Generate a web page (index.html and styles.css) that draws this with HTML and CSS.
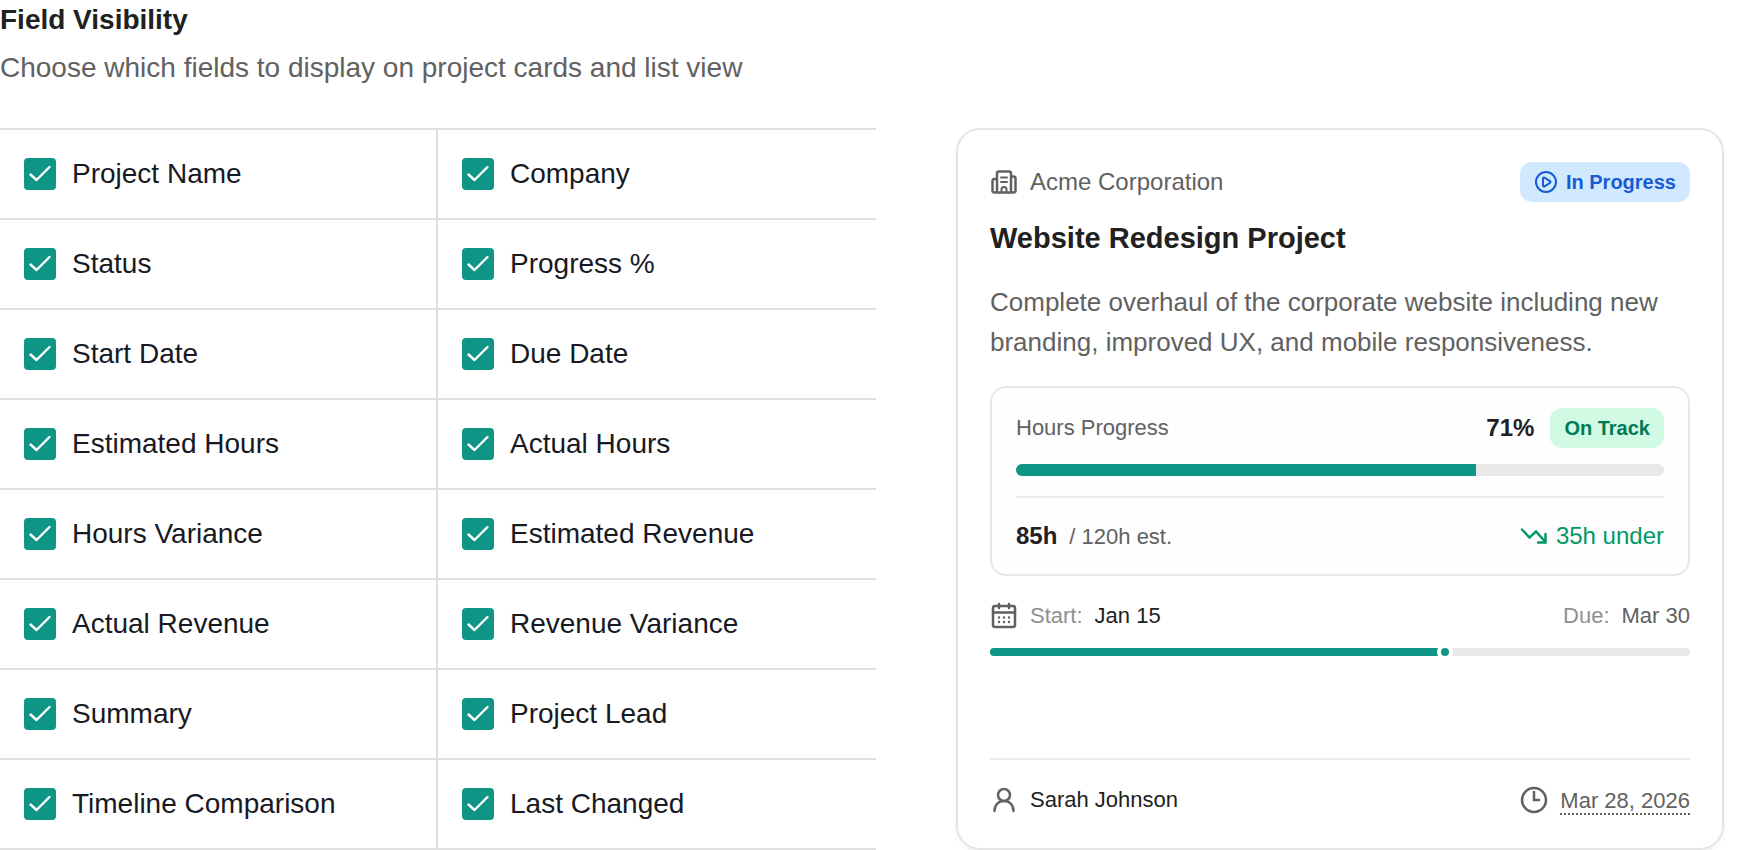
FILE: index.html
```html
<!DOCTYPE html>
<html lang="en">
<head>
    <meta charset="UTF-8">
    <meta name="viewport" content="width=device-width, initial-scale=1.0">
    <title>Field Visibility</title>
    <link rel="stylesheet" href="styles.css">
</head>
<body>
    <main class="settings">
        <header class="settings-header">
            <h1>Field Visibility</h1>
            <p>Choose which fields to display on project cards and list view</p>
        </header>
        <div class="settings-body">
            <form class="field-grid">
                <label class="field"><input type="checkbox" name="project-name" checked>Project Name</label>
                <label class="field"><input type="checkbox" name="company" checked>Company</label>
                <label class="field"><input type="checkbox" name="status" checked>Status</label>
                <label class="field"><input type="checkbox" name="progress" checked>Progress %</label>
                <label class="field"><input type="checkbox" name="start-date" checked>Start Date</label>
                <label class="field"><input type="checkbox" name="due-date" checked>Due Date</label>
                <label class="field"><input type="checkbox" name="estimated-hours" checked>Estimated Hours</label>
                <label class="field"><input type="checkbox" name="actual-hours" checked>Actual Hours</label>
                <label class="field"><input type="checkbox" name="hours-variance" checked>Hours Variance</label>
                <label class="field"><input type="checkbox" name="estimated-revenue" checked>Estimated Revenue</label>
                <label class="field"><input type="checkbox" name="actual-revenue" checked>Actual Revenue</label>
                <label class="field"><input type="checkbox" name="revenue-variance" checked>Revenue Variance</label>
                <label class="field"><input type="checkbox" name="summary" checked>Summary</label>
                <label class="field"><input type="checkbox" name="project-lead" checked>Project Lead</label>
                <label class="field"><input type="checkbox" name="timeline-comparison" checked>Timeline Comparison</label>
                <label class="field"><input type="checkbox" name="last-changed" checked>Last Changed</label>
            </form>

            <article class="card">
                <div class="row">
                    <span class="with-icon company">
                        <svg class="icon" viewBox="0 0 28 28">
                            <path d="M7 24.500V5.500a2 2 0 0 1 2-2h10a2 2 0 0 1 2 2v19M7 11H4.500A2 2 0 0 0 2.500 13v9.500a2 2 0 0 0 2 2h19a2 2 0 0 0 2-2V10.500a2 2 0 0 0-2-2H21"/>
                            <path class="thin" d="M11 9.500h6M11 14h6M11.500 24.500v-3a2.500 2.500 0 0 1 5 0v3"/>
                        </svg>
                        Acme Corporation
                    </span>
                    <span class="badge badge-blue">
                        <svg class="icon icon-small" viewBox="0 0 24 24">
                            <circle cx="12" cy="12" r="10"/>
                            <path d="M9 8.500v7c0 .8.8 1.200 1.500.8l5.500-3.500c.6-.4.6-1.200 0-1.600l-5.500-3.500C9.800 7.300 9 7.700 9 8.500z"/>
                        </svg>
                        In Progress
                    </span>
                </div>
                <h2>Website Redesign Project</h2>
                <p class="description">Complete overhaul of the corporate website including new branding, improved UX, and mobile responsiveness.</p>

                <section class="hours">
                    <div class="row">
                        <span>Hours Progress</span>
                        <span class="hours-status">
                            <strong>71%</strong>
                            <span class="badge badge-green">On Track</span>
                        </span>
                    </div>
                    <div class="bar"><div class="bar-fill" style="width: 71%"></div></div>
                    <div class="row hours-detail">
                        <span class="pair"><strong>85h</strong> <span>/ 120h est.</span></span>
                        <span class="variance">
                            <svg class="icon icon-sharp" viewBox="0 0 28 28">
                                <path d="M2 7.500l7.500 8 6.500-6 9 10M25.500 12v8.500H18"/>
                            </svg>
                            35h under
                        </span>
                    </div>
                </section>

                <section class="timeline">
                    <div class="row">
                        <span class="with-icon">
                            <svg class="icon" viewBox="0 0 28 28">
                                <rect x="3" y="4" width="22" height="21" rx="2"/>
                                <path d="M3 10.500h22M9 2v4M19 2v4"/>
                                <path d="M9 15.500h0M14 15.500h0M19 15.500h0M9 20h0M14 20h0M19 20h0"/>
                            </svg>
                            <span class="pair"><span class="muted">Start:</span> <span class="dark">Jan 15</span></span>
                        </span>
                        <span class="pair"><span class="muted">Due:</span> <span>Mar 30</span></span>
                    </div>
                    <div class="track">
                        <div class="track-fill" style="width: 65%"></div>
                        <div class="track-dot" style="left: 65%"></div>
                    </div>
                </section>

                <footer class="row card-footer">
                    <span class="with-icon">
                        <svg class="icon" viewBox="0 0 28 28">
                            <circle cx="14" cy="9" r="6"/>
                            <path d="M4.500 25c0-6 4-10 9.500-10s9.500 4 9.500 10"/>
                        </svg>
                        <span class="dark">Sarah Johnson</span>
                    </span>
                    <span class="with-icon">
                        <svg class="icon icon-sharp" viewBox="0 0 28 28">
                            <circle cx="14" cy="14" r="12"/>
                            <path d="M14 6v8h5"/>
                        </svg>
                        <span class="changed">Mar 28, 2026</span>
                    </span>
                </footer>
            </article>
        </div>
    </main>
</body>
</html>
```

FILE: styles.css
```css
* {
    box-sizing: border-box;
}
body {
    margin: 0;
    background: #ffffff;
    font-family: "Liberation Sans", Arial, sans-serif;
    color: #616161;
}
h1, h2, p {
    margin: 0;
}
.settings-header {
    display: flex;
    flex-direction: column;
    gap: 8px;
    margin-bottom: 40px;
    font-size: 28px;
    line-height: 40px;
}
.settings-header h1 {
    font-size: 28px;
    color: #212121;
}
.settings-body {
    display: grid;
    grid-template-columns: 73fr 64fr;
    gap: 80px;
    padding-right: 32px;
}

/* Field checkboxes */
.field-grid {
    display: grid;
    grid-template-columns: 1fr 1fr;
    border-top: 2px solid #e0e0e0;
}
.field {
    display: flex;
    align-items: center;
    gap: 16px;
    padding: 24px;
    border-bottom: 2px solid #e0e0e0;
    font-size: 28px;
    line-height: 40px;
    color: #171923;
}
.field:nth-child(odd) {
    border-right: 2px solid #e0e0e0;
}
.field input {
    appearance: none;
    width: 32px;
    height: 32px;
    margin: 0;
    border-radius: 4px;
    border: 2px solid #0f9585;
}
.field input:checked {
    border: none;
    background: #0f9585 url("data:image/svg+xml,%3Csvg xmlns='http://www.w3.org/2000/svg' viewBox='0 0 32 32' fill='none' stroke='white' stroke-width='2.4' stroke-linecap='round' stroke-linejoin='round'%3E%3Cpath d='M6.500 16.500l6 5.500L25.500 9'/%3E%3C/svg%3E") center / 32px no-repeat;
}

/* Preview card */
.card {
    display: flex;
    flex-direction: column;
    padding: 32px;
    border: 2px solid #e5e5e5;
    border-radius: 24px;
    box-shadow: 0 2px 4px rgba(0, 0, 0, 0.05);
    font-size: 22px;
    line-height: 32px;
}
.row {
    display: flex;
    justify-content: space-between;
    align-items: center;
}
.with-icon {
    display: flex;
    align-items: center;
    gap: 12px;
}
.pair {
    display: flex;
    align-items: baseline;
    gap: 12px;
}
.icon {
    width: 28px;
    height: 28px;
    flex: none;
    fill: none;
    stroke: currentColor;
    stroke-width: 2.5;
    stroke-linecap: round;
    stroke-linejoin: round;
}
.icon .thin {
    stroke-width: 2;
}
.icon-sharp {
    stroke-linejoin: miter;
}
.icon-small {
    width: 24px;
    height: 24px;
    stroke-width: 2;
}
.company {
    font-size: 24px;
}
.badge {
    display: flex;
    align-items: center;
    gap: 8px;
    padding: 0 14px;
    border-radius: 12px;
    font-size: 20px;
    font-weight: bold;
    line-height: 40px;
}
.badge-blue {
    background: #d1e9ff;
    color: #175cd3;
}
.badge-green {
    background: #d1fae5;
    color: #007a55;
}
.card h2 {
    margin: 16px 0 24px;
    font-size: 29px;
    line-height: 40px;
    color: #212121;
}
.description {
    font-size: 26px;
    line-height: 40px;
}
.hours {
    margin: 24px 0;
    padding: 20px 24px;
    border: 2px solid #e8e8e8;
    border-radius: 16px;
    background: #fefefe;
}
.hours strong {
    font-size: 24px;
    color: #212121;
}
.hours-status {
    display: flex;
    align-items: center;
    gap: 16px;
}
.bar {
    height: 12px;
    margin: 16px 0 20px;
    border-radius: 6px;
    background: #e8e8e8;
    overflow: hidden;
}
.bar-fill {
    height: 100%;
    background: #0f9585;
}
.hours-detail {
    height: 58px;
    padding-top: 20px;
    border-top: 2px solid #ebebeb;
}
.variance {
    display: flex;
    align-items: center;
    gap: 8px;
    font-size: 24px;
    color: #009966;
}
.muted {
    color: #8f8f8f;
}
.dark {
    color: #212121;
}
.track {
    position: relative;
    height: 8px;
    margin-top: 16px;
    border-radius: 4px;
    background: #e8e8e8;
    overflow: hidden;
}
.track-fill {
    height: 100%;
    background: #0f9585;
}
.track-dot {
    position: absolute;
    top: 50%;
    width: 16px;
    height: 16px;
    border: 4px solid #ffffff;
    border-radius: 50%;
    background: #0f9585;
    transform: translate(-50%, -50%);
}
.card-footer {
    margin-top: auto;
    padding-top: 24px;
    border-top: 2px solid #ebebeb;
}
.changed {
    height: 30px;
    border-bottom: 2px dotted #616161;
}
```
